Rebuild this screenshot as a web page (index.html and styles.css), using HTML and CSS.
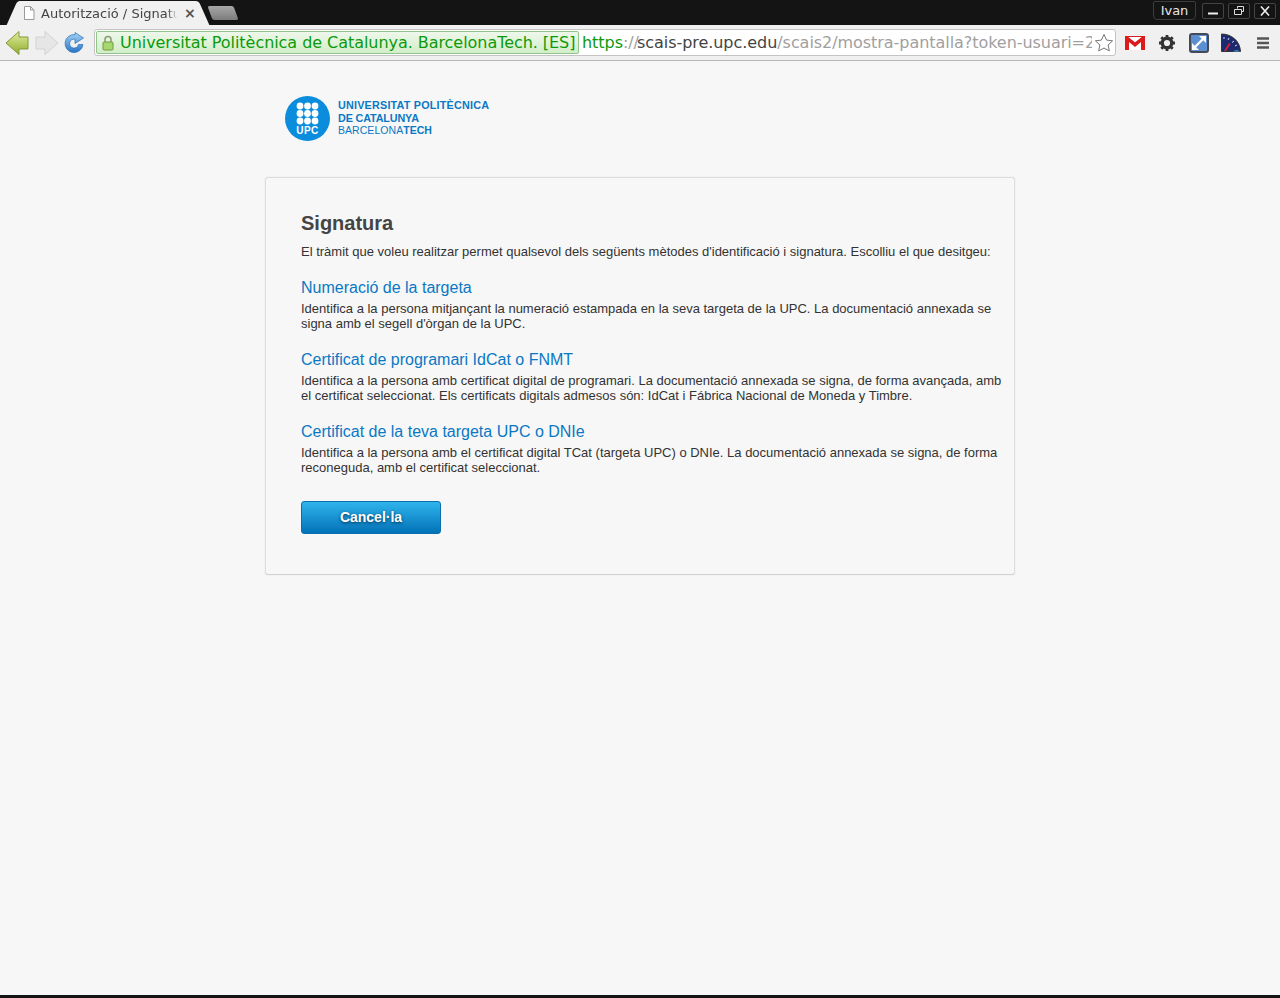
FILE: index.html
```html
<!DOCTYPE html>
<html lang="en">
<head>
    <meta charset="UTF-8">
    <meta name="viewport" content="width=device-width, initial-scale=1.0">
    <title>Autorització / Signatura</title>
    <link rel="stylesheet" href="styles.css">
</head>
<body>
    <div class="tabstrip">
        <div class="tab">
            <svg class="tab-icon" width="12" height="14" viewBox="0 0 12 14">
                <path d="M1.5 .5h6l3.500 3.500v9.500h-9.500z M7.500 .5v3.500h3.500" fill="#fff" stroke="#9a9a9a"/>
            </svg>
            <span class="tab-title">Autorització / Signatu</span>
            <span class="tab-close">×</span>
        </div>
        <div class="new-tab"></div>
        <div class="user-btn">Ivan</div>
        <div class="win-btns">
            <div class="win-btn">
                <svg width="12" height="10" viewBox="0 0 12 10"><path d="M1 7.500h10" stroke="#eee" stroke-width="2"/></svg>
            </div>
            <div class="win-btn">
                <svg width="12" height="10" viewBox="0 0 12 10" fill="none" stroke="#ddd"><path d="M4.500 2.500v-2h6v5h-2"/><path d="M1.500 3.500h7v5h-7z"/></svg>
            </div>
            <div class="win-btn">
                <svg width="12" height="10" viewBox="0 0 12 10"><path d="M2 .5l8 9M10 .5l-8 9" stroke="#eee" stroke-width="1.600"/></svg>
            </div>
        </div>
    </div>

    <div class="toolbar">
        <svg class="nav-icon" width="24" height="24" viewBox="0 0 24 24">
            <defs>
                <linearGradient id="backFill" x1="0" y1="0" x2="0" y2="1">
                    <stop offset="0" stop-color="#e2ecA0"/>
                    <stop offset="1" stop-color="#8fae2b"/>
                </linearGradient>
                <linearGradient id="reloadFill" x1="0" y1="0" x2="0" y2="1">
                    <stop offset="0" stop-color="#a4d4f6"/>
                    <stop offset="1" stop-color="#2a76c6"/>
                </linearGradient>
            </defs>
            <path d="M1 12 14 .5V6h9v12h-9v5.500z" fill="url(#backFill)" stroke="#84993a"/>
        </svg>
        <svg class="nav-icon" width="24" height="24" viewBox="0 0 24 24">
            <path d="M23 12 10 .5V6H1v12h9v5.500z" fill="#e6e6e6" stroke="#d2d2d2"/>
        </svg>
        <svg class="reload-icon" width="20" height="22" viewBox="0 0 20 22">
            <path d="M11 2.600A9 9 0 1 0 19 12.500H14.500A4.500 4.500 0 1 1 11 7.200V11.500L19.500 6 11 .5z" fill="url(#reloadFill)" stroke="#2a6fb5" stroke-width=".7"/>
        </svg>
        <div class="omnibox">
            <div class="ev-badge">
                <svg width="14" height="16" viewBox="0 0 14 16">
                    <path d="M4 7V4.500a3 3 0 0 1 6 0V7" fill="none" stroke="#8a9a70" stroke-width="1.500"/>
                    <rect x="2" y="7" width="10" height="8" rx="1" fill="#a6d86e" stroke="#6f9a45"/>
                </svg>
                <span>Universitat Politècnica de Catalunya. BarcelonaTech. [ES]</span>
            </div>
            <div class="url"><span class="url-scheme">https</span><span class="url-dim">://</span><span class="url-host">scais-pre.upc.edu</span><span class="url-dim">/scais2/mostra-pantalla?token-usuari=2</span></div>
            <svg class="star" width="22" height="20" viewBox="0 0 22 20">
                <path d="M12 1.500l2.600 5.600 6 .7-4.500 4.100 1.200 6L12 15l-5.300 2.900 1.200-6L3.400 7.800l6-.7z" fill="#fff" stroke="#777"/>
            </svg>
        </div>
        <div class="extensions">
            <svg width="20" height="14" viewBox="0 0 20 14">
                <rect width="20" height="14" fill="#fff"/>
                <path d="M0 0h20v14h-4V6l-6 5-6-5v8H0z" fill="#dc1c1c"/>
                <path d="M3 1h14l-7 6z" fill="#fff"/>
                <path d="M1 1l9 7 9-7" fill="none" stroke="#dc1c1c" stroke-width="2.600"/>
            </svg>
            <svg width="18" height="18" viewBox="0 0 18 18">
                <circle cx="9" cy="9" r="4.800" fill="none" stroke="#333" stroke-width="3.400"/>
                <path d="M9 1v3M9 14v3M1 9h3M14 9h3M3.300 3.300l2.200 2.200M12.500 12.500l2.200 2.200M14.700 3.300l-2.200 2.200M5.500 12.500l-2.200 2.200" stroke="#333" stroke-width="2.800"/>
            </svg>
            <svg width="20" height="20" viewBox="0 0 20 20">
                <rect x="1" y="1" width="18" height="18" rx="2" fill="#5b8fd2" stroke="#444b55" stroke-width="2"/>
                <path d="M4.500 15.500l11-11" stroke="#fff" stroke-width="2.400"/>
                <path d="M3 10v7h7zM17 10V3h-7z" fill="#fff"/>
            </svg>
            <svg class="ext-meter" width="20" height="20" viewBox="0 0 20 20">
                <path d="M.5 18.500V1c10 0 18.500 7 19 17.500z" fill="#1d2a6e" stroke="#333"/>
                <path d="M3 4v2M8 5l-1 2M13 8l-2 1.500M16 12l-2 1" stroke="#cfd6f0"/>
                <path d="M3 18l5-8 1.500 1L5 18z" fill="#e0203a"/>
                <path d="M12 18.500a6 6 0 0 1 7 0z" fill="#3fa8d8"/>
            </svg>
            <svg class="ext-menu" width="14" height="14" viewBox="0 0 14 14">
                <path d="M1 2.500h12M1 7h12M1 11.500h12" stroke="#555" stroke-width="2.400"/>
            </svg>
        </div>
    </div>

    <div class="page">
        <div class="container">
            <div class="logo">
                <svg width="45" height="45" viewBox="0 0 45 45">
                    <circle cx="22.500" cy="22.500" r="22.500" fill="#0a8ddc"/>
                    <g fill="#fff">
                        <circle cx="15" cy="10" r="3.400"/><circle cx="22.500" cy="10" r="3.400"/><circle cx="30" cy="10" r="3.400"/>
                        <circle cx="15" cy="17.500" r="3.400"/><circle cx="22.500" cy="17.500" r="3.400"/><circle cx="30" cy="17.500" r="3.400"/>
                        <circle cx="15" cy="25" r="3.400"/><circle cx="22.500" cy="25" r="3.400"/><circle cx="30" cy="25" r="3.400"/>
                    </g>
                    <text class="logo-upc" x="22.500" y="38" text-anchor="middle">UPC</text>
                </svg>
                <div class="logo-text">
                    <div>UNIVERSITAT POLITÈCNICA</div>
                    <div class="logo-de">DE CATALUNYA</div>
                    <div class="logo-light">BARCELONA<b>TECH</b></div>
                </div>
            </div>

            <div class="card">
                <h1>Signatura</h1>
                <p class="intro">El tràmit que voleu realitzar permet qualsevol dels següents mètodes d'identificació i signatura. Escolliu el que desitgeu:</p>

                <div class="method">
                    <a href="#">Numeració de la targeta</a>
                    <p>Identifica a la persona mitjançant la numeració estampada en la seva targeta de la UPC. La documentació annexada se signa amb el segell d'òrgan de la UPC.</p>
                </div>
                <div class="method">
                    <a href="#">Certificat de programari IdCat o FNMT</a>
                    <p>Identifica a la persona amb certificat digital de programari. La documentació annexada se signa, de forma avançada, amb el certificat seleccionat. Els certificats digitals admesos són: IdCat i Fábrica Nacional de Moneda y Timbre.</p>
                </div>
                <div class="method">
                    <a href="#">Certificat de la teva targeta UPC o DNIe</a>
                    <p>Identifica a la persona amb el certificat digital TCat (targeta UPC) o DNIe. La documentació annexada se signa, de forma reconeguda, amb el certificat seleccionat.</p>
                </div>

                <button type="button">Cancel·la</button>
            </div>
        </div>
    </div>
    <div class="bottom-edge"></div>
</body>
</html>
```

FILE: styles.css
```css
* {
    box-sizing: border-box;
}
html, body {
    margin: 0;
    height: 998px;
    overflow: hidden;
}
body {
    display: flex;
    flex-direction: column;
    background-color: #f7f7f7;
    font-family: "Liberation Sans", Arial, sans-serif;
    color: #333;
}

/* browser window */
.tabstrip {
    height: 25px;
    flex: none;
    display: flex;
    align-items: flex-start;
    background-color: #141414;
    font-family: "DejaVu Sans", sans-serif;
}
.tab {
    position: relative;
    z-index: 0;
    width: 178px;
    height: 24px;
    margin: 1px 0 0 18px;
    display: flex;
    align-items: center;
    background-color: #f0f0f0;
    border-radius: 3px 3px 0 0;
    font-size: 13px;
    color: #444;
}
.tab::before, .tab::after {
    content: "";
    position: absolute;
    z-index: -1;
    top: 0;
    bottom: 0;
    width: 16px;
    background-color: #f0f0f0;
    border-radius: 3px 3px 0 0;
}
.tab::before {
    left: -6px;
    transform: skewX(-24deg);
}
.tab::after {
    right: -8px;
    transform: skewX(24deg);
}
.tab-icon {
    margin: 0 6px 0 5px;
    flex: none;
}
.tab-title {
    width: 137px;
    white-space: nowrap;
    -webkit-mask-image: linear-gradient(to right, #000 92%, transparent);
    mask-image: linear-gradient(to right, #000 92%, transparent);
}
.tab-close {
    margin-left: 6px;
    font-size: 14px;
    font-weight: bold;
    color: #555;
}
.new-tab {
    width: 26px;
    height: 14px;
    margin: 6px 0 0 14px;
    background: linear-gradient(#a8a8a8, #7c7c7c);
    border-radius: 2px;
    transform: skewX(20deg);
}
.user-btn {
    margin: 1px 0 0 auto;
    width: 43px;
    height: 19px;
    border: 1px solid #3c3c3c;
    border-radius: 2px 2px 4px 4px;
    text-align: center;
    font-size: 13px;
    line-height: 18px;
    color: #e6e6e6;
}
.win-btns {
    display: flex;
    gap: 4px;
    margin: 3px 4px 0 6px;
}
.win-btn {
    width: 22px;
    height: 16px;
    display: flex;
    align-items: center;
    justify-content: center;
    border: 1px solid #444;
    border-radius: 2px;
}
.toolbar {
    height: 36px;
    flex: none;
    display: flex;
    align-items: center;
    padding: 0 7px 0 5px;
    background-color: #f0f0f0;
    border-bottom: 1px solid #b5b5b5;
    font-family: "DejaVu Sans", sans-serif;
}
.nav-icon {
    flex: none;
    margin-right: 0;
}
.nav-icon + .nav-icon {
    margin-left: 6px;
}
.reload-icon {
    flex: none;
    margin-left: 5px;
}
.omnibox {
    width: 1022px;
    height: 27px;
    margin-left: 10px;
    padding: 0 1px;
    flex: none;
    display: flex;
    align-items: center;
    position: relative;
    background-color: #fff;
    border: 1px solid #c4c4c4;
    border-radius: 3px;
    font-size: 16px;
    letter-spacing: -0.05px;
    white-space: nowrap;
    overflow: hidden;
}
.ev-badge {
    height: 23px;
    width: 483px;
    flex: none;
    display: flex;
    align-items: center;
    gap: 5px;
    padding-left: 4px;
    background: linear-gradient(#eef8ea, #d3edc9);
    border: 1px solid #8fc48a;
    border-radius: 2px;
    color: #0b9a0b;
}
.url {
    margin-left: 3px;
    color: #a0a0a0;
}
.url-scheme {
    color: #0b9a0b;
}
.url-dim {
    color: #a0a0a0;
}
.url-host {
    margin-left: -2px;
    color: #444;
}
.star {
    position: absolute;
    right: 1px;
    top: 3px;
    background-color: #fff;
}
.extensions {
    flex: none;
    display: flex;
    align-items: center;
    margin-left: 9px;
    gap: 13px;
}
.ext-meter {
    margin-left: -1px;
}
.ext-menu {
    margin-left: 2px;
}

/* page content */
.page {
    flex: 1;
    display: flex;
    justify-content: center;
}
.container {
    width: 750px;
}
.logo {
    height: 116px;
    padding: 35px 0 0 20px;
    display: flex;
    align-items: flex-start;
    color: #0a78c4;
}
.logo-upc {
    font: bold 10px "Liberation Sans", sans-serif;
    letter-spacing: 0.5px;
    fill: #fff;
}
.logo-text {
    margin: 3px 0 0 8px;
    font-size: 10.800px;
    line-height: 12.500px;
    font-weight: bold;
    letter-spacing: 0.2px;
    white-space: nowrap;
}
.logo-de {
    letter-spacing: -0.15px;
}
.logo-light {
    font-size: 10.500px;
    font-weight: normal;
    letter-spacing: 0.05px;
}
.card {
    height: 398px;
    padding: 34px 10px 0 35px;
    background-color: #f7f7f7;
    border: 1px solid #ddd;
    border-bottom-color: #d2d2d2;
    border-radius: 3px;
    box-shadow: 0 0 2px rgba(0, 0, 0, 0.08);
}
h1 {
    margin: 0;
    font-size: 20px;
    line-height: 23px;
    font-weight: bold;
    color: #444;
}
.intro {
    margin: 9px 0 0;
}
p {
    font-size: 13px;
    line-height: 15px;
    margin: 0;
}
.method {
    margin-top: 19px;
}
.method a {
    display: block;
    font-size: 16px;
    line-height: 19px;
    color: #0a78c4;
    text-decoration: none;
}
.method p {
    margin-top: 4px;
}
button {
    display: block;
    width: 140px;
    height: 33px;
    margin-top: 26px;
    padding: 0 0 2px;
    background: linear-gradient(#2fb4ec, #0272b8);
    border: 1px solid #0a6fae;
    border-radius: 3px;
    font-family: inherit;
    font-size: 14px;
    font-weight: bold;
    color: #fff;
    text-shadow: 0 1px 3px rgba(0, 40, 70, 0.9);
    cursor: pointer;
}
.bottom-edge {
    height: 3px;
    flex: none;
    background-color: #141414;
}
```
